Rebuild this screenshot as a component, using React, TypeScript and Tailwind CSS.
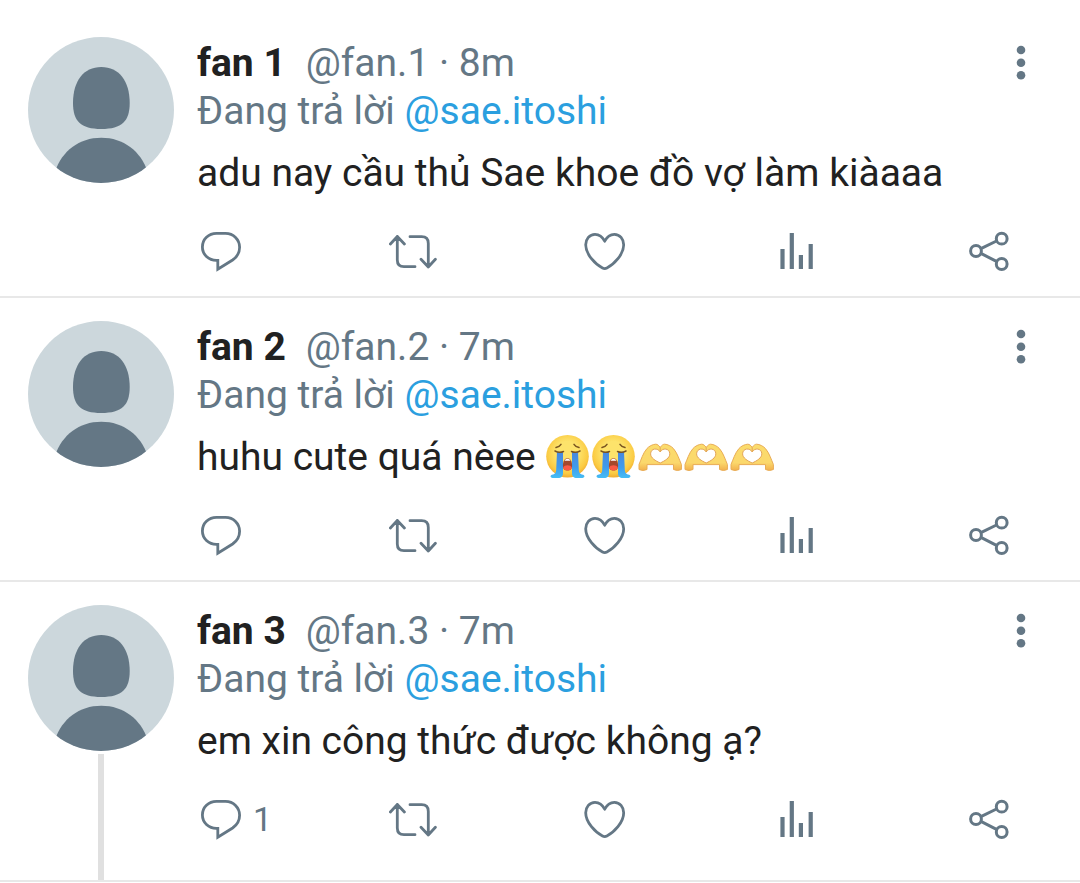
import type { ReactNode } from "react";

type Tweet = {
  name: string;
  handle: string;
  time: string;
  text: string;
  emojis?: ("cry" | "hands")[];
  replies?: number;
  thread?: boolean;
};

const tweets: Tweet[] = [
  { name: "fan 1", handle: "@fan.1", time: "8m", text: "adu nay cầu thủ Sae khoe đồ vợ làm kiàaaa" },
  {
    name: "fan 2",
    handle: "@fan.2",
    time: "7m",
    text: "huhu cute quá nèee",
    emojis: ["cry", "cry", "hands", "hands", "hands"],
  },
  {
    name: "fan 3",
    handle: "@fan.3",
    time: "7m",
    text: "em xin công thức được không ạ?",
    replies: 1,
    thread: true,
  },
];

function Avatar() {
  return (
    <svg viewBox="0 0 146 146" className="size-[146px] shrink-0" aria-hidden="true">
      <defs>
        <clipPath id="avatar-clip">
          <circle cx="73" cy="73" r="73" />
        </clipPath>
      </defs>
      <g clipPath="url(#avatar-clip)">
        <rect width="146" height="146" fill="#ccd7dc" />
        <g fill="#647785">
          <path d="M73.3 30C91 30 101.7 44 101.7 66C101.7 84 94 92 73.3 92C52.6 92 45 84 45 66C45 44 55.6 30 73.3 30Z" />
          <path d="M27 134.5C34 114 51 100.7 73.3 100.7C95.6 100.7 112.6 114 119.6 134.5V146H27Z" />
        </g>
      </g>
    </svg>
  );
}

function CryEmoji() {
  return (
    <svg viewBox="0 0 46 48" className="inline-block h-12 w-[46px] align-top" role="img" aria-label="😭">
      <defs>
        <radialGradient id="cry-face" cx="50%" cy="42%" r="60%">
          <stop offset="0.45" stopColor="#fde36b" />
          <stop offset="0.8" stopColor="#fbcb43" />
          <stop offset="1" stopColor="#efa52c" />
        </radialGradient>
        <linearGradient id="cry-tear" x1="0" y1="0" x2="0" y2="1">
          <stop offset="0" stopColor="#4a86dc" />
          <stop offset="0.6" stopColor="#3f9cec" />
          <stop offset="1" stopColor="#45bdf5" />
        </linearGradient>
      </defs>
      <circle cx="22.5" cy="23.3" r="21.3" fill="url(#cry-face)" />
      <path d="M12 18.5q3 1.5 6 0v21.500c0 3.500-1.500 5-5 5H7.500c-2.500-.5-2.500-2.500-.5-3.200 3-.8 4-1.800 4.200-4.800z" fill="url(#cry-tear)" />
      <path d="M33 18.5q-3 1.500-6 0v21.500c0 3.500 1.500 5 5 5h5.500c2.500-.5 2.500-2.500.5-3.200-3-.8-4-1.800-4.200-4.800z" fill="url(#cry-tear)" />
      <path d="M22.5 25.300c-3 0-4.600 3.500-4.600 7.500 0 3.500 1.800 4.700 4.600 4.700s4.600-1.200 4.600-4.700c0-4-1.600-7.500-4.600-7.500z" fill="#a4482c" />
      <path d="M18.200 34.500c1-3 7.600-3 8.600 0-.4 2-2 3-4.300 3s-3.900-1-4.300-3z" fill="#fa5a46" />
      <path d="M19.500 27.800c1-2.800 5-2.800 6 0z" fill="#fff" />
      <g fill="none" stroke="#7a541f" strokeWidth="1.5" strokeLinecap="round">
        <path d="M11 14.500c2-.5 4-1.500 5-3.200M34 14.500c-2-.5-4-1.500-5-3.200" />
        <path d="M10 18c2.500 1.500 6 1.500 8.500.5M35 18c-2.500 1.500-6 1.500-8.500.5" />
      </g>
    </svg>
  );
}

function HandsEmoji() {
  return (
    <svg viewBox="0 0 46 48" className="inline-block h-12 w-[46px] align-top" role="img" aria-label="🫶">
      <defs>
        <linearGradient id="hands-skin" x1="0" y1="0" x2="0" y2="1">
          <stop offset="0" stopColor="#fbdc6c" />
          <stop offset="0.7" stopColor="#fbd86c" />
          <stop offset="1" stopColor="#f2b04c" />
        </linearGradient>
      </defs>
      <path
        d="M2 36.500V31.500C4 27 6 20 10 15.500C12 13.200 16 11.200 18.800 11.200C20.500 11.200 21.800 12.600 23.200 14.300C24.600 12.600 25.900 11.200 27.600 11.200C30.400 11.200 34.400 13.200 36.400 15.500C40.400 20 42.400 27 44.400 31.500V36.500Q40.500 38.500 36.500 36.500V31.600H10V36.500Q6 38.500 2 36.500Z"
        fill="url(#hands-skin)"
        stroke="#e9ac55"
        strokeLinejoin="round"
      />
      <path
        d="M23.200 19C21 14.500 13.600 15.200 13.600 20.800C13.600 25 18.500 27.800 23.200 30C27.900 27.800 32.800 25 32.800 20.800C32.800 15.200 25.400 14.500 23.200 19Z"
        fill="#fff"
        stroke="#e3a456"
      />
      <path d="M23.200 14.300V18.500" stroke="#e3a456" />
    </svg>
  );
}

function ActionButton({ label, children, count }: { label: string; children: ReactNode; count?: number }) {
  return (
    <button type="button" aria-label={label} className="flex w-12 items-center gap-2 text-[#647785]">
      <svg
        viewBox="0 0 48 48"
        className="size-12 shrink-0"
        fill="none"
        stroke="currentColor"
        strokeWidth="2.8"
        strokeLinecap="round"
        strokeLinejoin="round"
        aria-hidden="true"
      >
        {children}
      </svg>
      {count && <span className="text-[34px]">{count}</span>}
    </button>
  );
}

function Actions({ replies }: { replies?: number }) {
  return (
    <div className="mt-[30px] flex justify-between pr-8">
      <ActionButton label="Reply" count={replies}>
        <path
          strokeLinejoin="miter"
          d="M19.5 6.4H28.5C36.5 6.4 42.6 12.5 42.6 20.3C42.6 25.8 40 30 35.6 33L20.8 42.2V33.4H19.5C11.5 33.2 5.4 27.5 5.4 20C5.4 12.4 11.5 6.4 19.5 6.4Z"
        />
      </ActionButton>
      <ActionButton label="Retweet">
        <path d="M1.4 17L8.3 9.5L15.4 17M8.300 9.5V33Q8.3 39.7 15 39.7H26M21 9.7H32.6Q39.3 9.7 39.3 16.4V40M32 32.3L39.3 40L46.4 32.3" />
      </ActionButton>
      <ActionButton label="Like">
        <path d="M23.7 14.2C21.5 9.8 18 7.3 14 7.3C8.6 7.3 4.7 12 4.7 17.8C4.7 27.5 14.5 37.5 21.5 41Q23.7 42.1 25.9 41C32.9 37.5 42.7 27.5 42.7 17.8C42.7 12 38.8 7.3 33.4 7.3C29.4 7.3 25.9 9.8 23.7 14.2Z" />
      </ActionButton>
      <ActionButton label="View analytics">
        <g fill="currentColor" stroke="none">
          <rect x="7.4" y="22" width="4.2" height="20" />
          <rect x="16.7" y="6" width="4.2" height="36" />
          <rect x="25.8" y="28" width="4.2" height="14" />
          <rect x="35.6" y="17" width="4.2" height="25" />
        </g>
      </ActionButton>
      <ActionButton label="Share">
        <g strokeWidth="3">
          <circle cx="11" cy="24" r="5.4" />
          <circle cx="36.7" cy="11.700" r="5.4" />
          <circle cx="36.7" cy="37" r="5.4" />
          <path d="M16.4 21.300L31.5 14M16.4 26.700L31.5 34.300" />
        </g>
      </ActionButton>
    </div>
  );
}

function TweetItem({ tweet }: { tweet: Tweet }) {
  return (
    <li className="flex gap-[23px] border-b-2 border-[#e8e8e8] pt-[23px] pr-[35px] pl-7">
      <div className="flex flex-col items-center">
        <Avatar />
        {tweet.thread && <div className="mt-[3px] w-1.5 flex-1 bg-[#e0e0e0]" />}
      </div>

      <article className={`min-w-0 flex-1 pt-0.5 ${tweet.thread ? "pb-[37px]" : "pb-[21px]"}`}>
        <div className="flex items-center justify-between">
          <p className="text-[#647785]">
            <strong className="mr-5 font-bold text-[#212121]">{tweet.name}</strong>
            {tweet.handle} · {tweet.time}
          </p>
          <button type="button" aria-label="More" className="text-[#647785]">
            <svg viewBox="0 0 48 48" className="size-12" fill="currentColor" aria-hidden="true">
              <circle cx="24" cy="11" r="4.3" />
              <circle cx="24" cy="23.7" r="4.3" />
              <circle cx="24" cy="36.3" r="4.3" />
            </svg>
          </button>
        </div>
        <p className="text-[#647785]">
          Đang trả lời{" "}
          <a href="#" className="text-[#2b9fdf]">
            @sae.itoshi
          </a>
        </p>
        <p className="mt-3.5 text-[#212121]">
          {tweet.text}{" "}
          {tweet.emojis?.map((emoji, i) => (emoji === "cry" ? <CryEmoji key={i} /> : <HandsEmoji key={i} />))}
        </p>
        <Actions replies={tweet.replies} />
      </article>
    </li>
  );
}

export default function App() {
  return (
    <main className="bg-white pt-3.5 font-[Roboto,sans-serif] text-[39px] leading-[48px]">
      <ul>
        {tweets.map((tweet) => (
          <TweetItem key={tweet.handle} tweet={tweet} />
        ))}
      </ul>
    </main>
  );
}
